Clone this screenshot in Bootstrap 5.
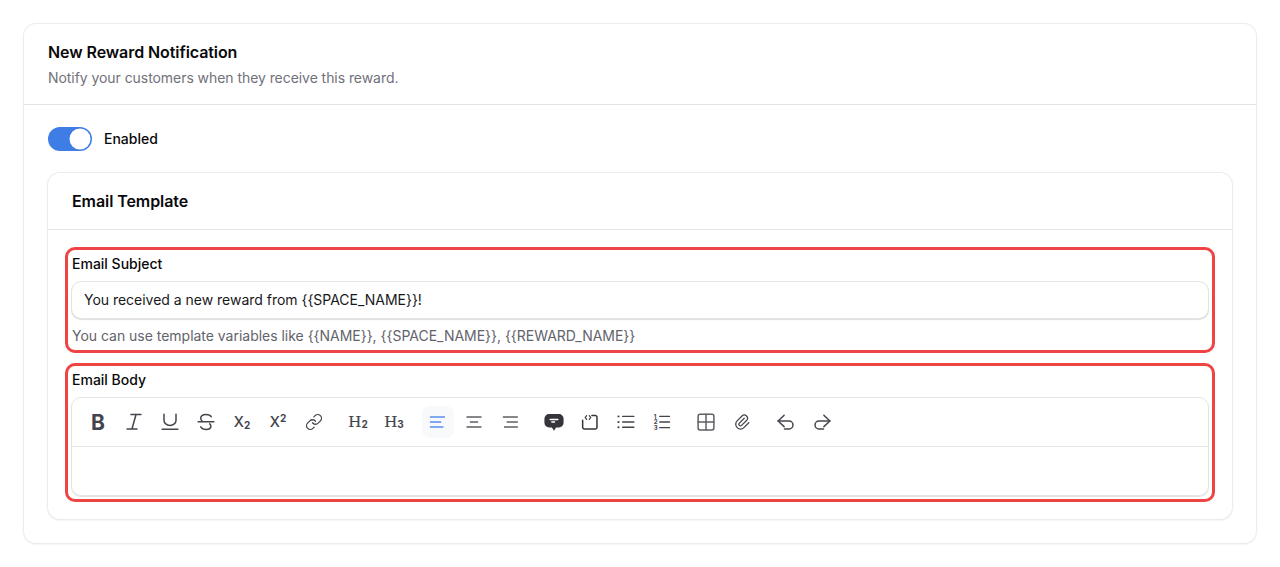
<!DOCTYPE html>
<html lang="en">
<head>
  <meta charset="UTF-8" />
  <meta name="viewport" content="width=device-width, initial-scale=1.0"/>
  <title>New Reward Notification</title>
  <link href="https://cdn.jsdelivr.net/npm/bootstrap@5.3.3/dist/css/bootstrap.min.css" rel="stylesheet">
  <style>
    body {
      background-color: #fff;
      font-family: Inter, "Liberation Sans", sans-serif;
      color: #09090b;
    }

    .panel {
      border: 0;
      border-radius: 12px;
      box-shadow: 0 0 0 1px #ececef, 0 1px 3px rgba(0, 0, 0, 0.09);
    }

    .panel-head {
      border-bottom: 1px solid #e4e4e7;
    }

    .outer-head {
      height: 81px;
      padding: 18px 24px 0;
    }

    .outer-body {
      padding: 22px 24px 24px;
    }

    .title {
      font-size: 16px;
      font-weight: 600;
      line-height: 20px;
      letter-spacing: -0.08px;
    }

    .subtitle {
      font-size: 14px;
      line-height: 20px;
      color: #71717a;
      margin-top: 6px;
      letter-spacing: -0.06px;
    }

    .form-switch {
      padding-left: 0;
      min-height: 24px;
      margin: 0 0 22px;
      gap: 12px;
    }

    .form-switch .form-check-input {
      width: 44px;
      height: 24px;
      margin: 0;
      border: 0;
      float: none;
      background-size: 24px 24px;
    }

    .form-switch .form-check-input:checked {
      background-color: #3f7de6;
      background-image: url("data:image/svg+xml,%3csvg xmlns='http://www.w3.org/2000/svg' viewBox='-12 -12 24 24'%3e%3ccircle r='10.5' fill='%23fff'/%3e%3c/svg%3e");
    }

    .form-check-label {
      font-size: 14px;
      font-weight: 500;
      line-height: 24px;
    }

    .inner-head {
      height: 57px;
      padding: 18px 24px 0;
    }

    .inner-body {
      padding: 17px 17px 17px;
    }

    .marked {
      border: 3px solid #ef4444;
      border-radius: 10px;
      padding: 4px 3px;
    }

    .marked + .marked {
      margin-top: 10px;
      padding-bottom: 3px;
    }

    .field-label {
      display: block;
      font-size: 14px;
      font-weight: 500;
      line-height: 20px;
      padding-left: 1px;
      margin-bottom: 7px;
    }

    .subject-input {
      height: 38px;
      font-size: 14px;
      color: #18181b;
      padding: 0 12px 2px;
      border: 1px solid #e4e4e7;
      border-radius: 10px;
      box-shadow: 0 1px 1px rgba(0, 0, 0, 0.13);
      font-family: inherit;
      letter-spacing: -0.02px;
    }

    .hint {
      font-size: 14px;
      line-height: 20px;
      color: #63636b;
      margin-top: 7px;
      padding-left: 1px;
      letter-spacing: -0.02px;
    }

    .editor {
      height: 99px;
      border: 1px solid #e4e4e7;
      border-radius: 10px;
      box-shadow: 0 1px 1px rgba(0, 0, 0, 0.13);
      margin-top: 7px;
    }

    .toolbar {
      height: 49px;
      padding: 8px 10px 0;
      border-bottom: 1px solid #e4e4e7;
      gap: 12px;
    }

    .tool-group {
      gap: 4px;
    }

    .tool {
      width: 32px;
      height: 32px;
      padding: 0;
      border: 0;
      border-radius: 8px;
      background: transparent;
      color: #44444c;
      display: flex;
      align-items: center;
      justify-content: center;
      line-height: 1;
    }

    .tool.active {
      background: #f8f9fa;
      color: #5b8def;
    }

    .tool svg {
      width: 18px;
      height: 18px;
      fill: none;
      stroke: currentColor;
      stroke-width: 2;
      stroke-linecap: round;
      stroke-linejoin: round;
    }

    .tool svg text {
      fill: currentColor;
      stroke: none;
      font-size: 8px;
      font-weight: 700;
    }

    .tool svg.wide {
      width: 20px;
      height: 20px;
    }

    .tool svg.flat {
      stroke-linecap: butt;
      stroke-width: 2.2;
    }

    .tool.soft {
      color: #5f5f66;
    }

    .tool.solid {
      color: #35353b;
    }

    .t-bold { font-size: 21px; font-weight: 700; }
    .t-script { font-size: 14.5px; font-weight: 500; }
    .t-script small { font-size: 10px; font-weight: 700; }
    .t-script .down { position: relative; top: 3px; }
    .t-script .up { position: relative; top: -4px; }
    .t-head { font-family: "DejaVu Serif", serif; font-size: 15px; -webkit-text-stroke: 0.2px currentColor; }
    .t-head small { font-family: Inter, sans-serif; font-size: 10px; font-weight: 700; position: relative; top: 2px; -webkit-text-stroke: 0; }
  </style>
</head>
<body>

<div class="p-4">
  <div class="card panel">
    <div class="panel-head outer-head">
      <div class="title">New Reward Notification</div>
      <div class="subtitle">Notify your customers when they receive this reward.</div>
    </div>
    <div class="outer-body">
      <div class="form-check form-switch d-flex align-items-center">
        <input class="form-check-input" type="checkbox" role="switch" id="enabledSwitch" checked>
        <label class="form-check-label" for="enabledSwitch">Enabled</label>
      </div>

      <div class="card panel">
        <div class="panel-head inner-head">
          <div class="title">Email Template</div>
        </div>
        <div class="inner-body">
          <div class="marked">
            <label class="field-label" for="subject">Email Subject</label>
            <input class="form-control subject-input" id="subject" type="text" value="You received a new reward from {{SPACE_NAME}}!">
            <div class="hint">You can use template variables like {{NAME}}, {{SPACE_NAME}}, {{REWARD_NAME}}</div>
          </div>

          <div class="marked">
            <div class="field-label mb-0">Email Body</div>
            <div class="editor">
              <div class="toolbar d-flex">
                <div class="tool-group d-flex">
                  <button class="tool t-bold" type="button">B</button>
                  <button class="tool" type="button" aria-label="Italic">
                    <svg viewBox="0 0 24 24"><path d="M8 2h13.300M2.700 21.300H16M14.700 2 9.300 21.300"/></svg>
                  </button>
                  <button class="tool" type="button" aria-label="Underline">
                    <svg viewBox="0 0 24 24"><path d="M4 1.500v8.500a8 6.500 0 0 0 16 0V1.500M1.500 21.500h21"/></svg>
                  </button>
                  <button class="tool" type="button" aria-label="Strikethrough">
                    <svg viewBox="0 0 24 24"><path d="M1.500 11.700h21M19 5c-1-2-3.500-3-7-3-4 0-7 2-7 5 0 1.800.7 3.300 2.500 4.700M17 14.500c1 1 1.500 2 1.500 3.200 0 2.700-2.800 4.300-6.500 4.300-3.500 0-5.800-1.300-7-3.500"/></svg>
                  </button>
                  <button class="tool t-script" type="button">X<small class="down">2</small></button>
                  <button class="tool t-script" type="button">X<small class="up">2</small></button>
                  <button class="tool" type="button" aria-label="Link">
                    <svg viewBox="0 0 24 24" style="stroke-width:1.7"><path d="M10 13a5 5 0 0 0 7.540.540l3-3a5 5 0 0 0-7.070-7.070l-1.720 1.710"/><path d="M14 11a5 5 0 0 0-7.540-.540l-3 3a5 5 0 0 0 7.070 7.070l1.710-1.710"/></svg>
                  </button>
                </div>
                <div class="tool-group d-flex">
                  <button class="tool t-head" type="button">H<small>2</small></button>
                  <button class="tool t-head" type="button">H<small>3</small></button>
                </div>
                <div class="tool-group d-flex">
                  <button class="tool active" type="button" aria-label="Align left">
                    <svg class="flat" viewBox="0 0 24 24"><path d="M1.300 5.300h20M1.300 12h15M1.300 18.700h18"/></svg>
                  </button>
                  <button class="tool soft" type="button" aria-label="Align center">
                    <svg class="flat" viewBox="0 0 24 24"><path d="M2 5.300h20M6.500 12h11M2 18.700h20"/></svg>
                  </button>
                  <button class="tool soft" type="button" aria-label="Align right">
                    <svg class="flat" viewBox="0 0 24 24"><path d="M2.500 5.300h20M7.500 12h15M4 18.700h18.500"/></svg>
                  </button>
                </div>
                <div class="tool-group d-flex">
                  <button class="tool solid" type="button" aria-label="Quote">
                    <svg class="wide" viewBox="0 0 24 24"><path d="M6 2.500h12a5.500 5.500 0 0 1 5.500 5.500v5a5.500 5.500 0 0 1-5.500 5.500h-3.500L12 22.500l-2.500-4H6A5.500 5.500 0 0 1 .5 13V8A5.500 5.500 0 0 1 6 2.500z" fill="currentColor" stroke="none"/><path d="M7.500 9h9M9.500 12h3" stroke="#fff" stroke-width="2"/></svg>
                  </button>
                  <button class="tool solid" type="button" aria-label="Code block">
                    <svg viewBox="0 0 24 24"><path d="M14.500 3.300H19a2.300 2.300 0 0 1 2.300 2.300V19a2.300 2.300 0 0 1-2.300 2.300H4.500A2.300 2.300 0 0 1 2.200 19V9.500"/><path d="M7.500 3.500 5.500 6l2 2.500M11 3.500 13 6l-2 2.500" stroke-width="1.600"/></svg>
                  </button>
                  <button class="tool" type="button" aria-label="Bullet list">
                    <svg viewBox="0 0 24 24"><path d="M7.500 4.500h15M7.500 12h15M7.500 19h15" stroke-width="1.800"/><path d="M1.700 4.500h.5M1.700 12h.5M1.700 19h.5" stroke-width="2.400"/></svg>
                  </button>
                  <button class="tool" type="button" aria-label="Numbered list">
                    <svg viewBox="0 0 24 24"><path d="M9 4.500h13M9 12h13M9 19.500h13" stroke-width="1.800"/><text x="1" y="7.500">1</text><text x="1" y="15">2</text><text x="1" y="22.500">3</text></svg>
                  </button>
                </div>
                <div class="tool-group d-flex">
                  <button class="tool soft" type="button" aria-label="Table">
                    <svg viewBox="0 0 24 24"><rect x="1.500" y="1.500" width="21" height="21" rx="2.500"/><path d="M1.500 12h21M12 1.500v21"/></svg>
                  </button>
                  <button class="tool" type="button" aria-label="Attachment">
                    <svg viewBox="0 0 24 24" style="stroke-width:1.7"><path d="M15 7l-6.500 6.500a1.500 1.500 0 0 0 3 3l6.500 -6.500a3 3 0 0 0 -6 -6l-6.500 6.500a4.500 4.500 0 0 0 9 9l6.500 -6.500"/></svg>
                  </button>
                </div>
                <div class="tool-group d-flex">
                  <button class="tool" type="button" aria-label="Undo">
                    <svg viewBox="0 0 24 24"><path d="M9.500 3 1.500 10.700l8 7.500"/><path d="M1.500 10.700H16a5.300 5.300 0 0 1 0 10.600h-6"/></svg>
                  </button>
                  <button class="tool" type="button" aria-label="Redo">
                    <svg viewBox="0 0 24 24"><path d="m14.500 3 8 7.700-8 7.500"/><path d="M22.500 10.700H8a5.300 5.300 0 0 0 0 10.600h6"/></svg>
                  </button>
                </div>
              </div>
            </div>
          </div>
        </div>
      </div>
    </div>
  </div>
</div>

<script src="https://cdn.jsdelivr.net/npm/bootstrap@5.3.3/dist/js/bootstrap.bundle.min.js"></script>
</body>
</html>
